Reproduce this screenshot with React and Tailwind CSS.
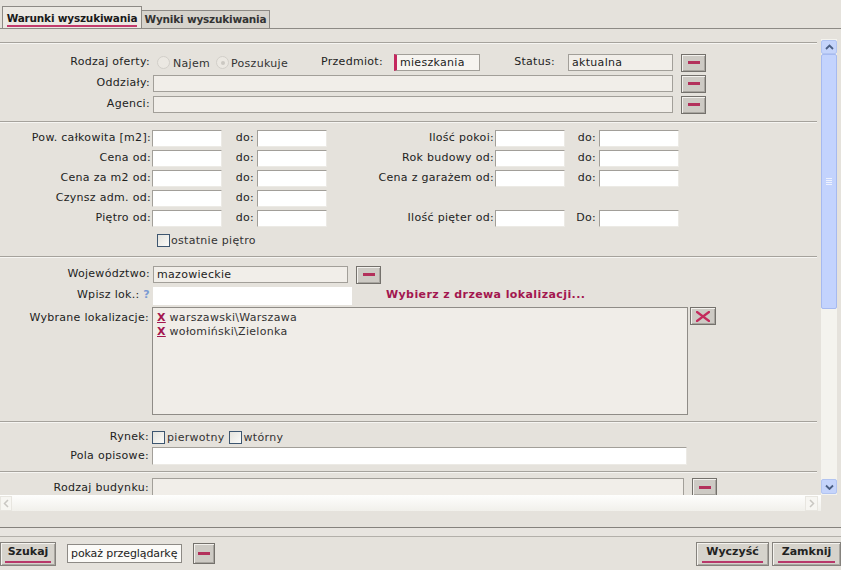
import React from 'react';

// Search form panel — XP style
const LBL = 'text-right pr-[1px] whitespace-nowrap';
const INPUT_DIS = 'h-[17px] bg-[#f1eee9] border border-[#a29f99] px-[3px] leading-[15px] whitespace-nowrap overflow-hidden';
const INPUT_W = 'h-[17px] bg-white border-t border-l border-[#a29f99] border-r border-b border-r-[#eceae5] border-b-[#eceae5]';

const Sep = () => <div className="h-[2px] w-[817px] border-t border-[#a5a29c] border-b border-b-[#f6f5f2]" />;

const DashBtn = ({ className = '' }) => (
  <div className={`w-[25px] h-[18px] flex items-center justify-center bg-[#cdcac4] border border-[#74716c] shadow-[inset_1px_1px_0_#f3f1ed,inset_-1px_-1px_0_#a8a59f] ${className}`}>
    <span className="w-[12px] h-[3px] bg-[#b3305b]" />
  </div>
);

const XBtn = ({ className = '' }) => (
  <div className={`w-[26px] h-[18px] flex items-center justify-center bg-[#cdcac4] border border-[#74716c] shadow-[inset_1px_1px_0_#f3f1ed,inset_-1px_-1px_0_#a8a59f] ${className}`}>
    <svg width="14" height="11" viewBox="0 0 14 11">
      <path d="M1 1 L13 10 M13 1 L1 10" stroke="#c42a5c" strokeWidth="2.2" strokeLinecap="round" />
    </svg>
  </div>
);

const Radio = ({ selected, className = '' }) => (
  <span className={`w-[13px] h-[13px] rounded-full border border-[#d2cfc9] bg-[#ebe8e2] flex items-center justify-center ${className}`}>
    {selected && <span className="w-[4px] h-[4px] rounded-full bg-[#cbc8c2]" />}
  </span>
);

const Check = ({ className = '' }) => (
  <span className={`w-[13px] h-[13px] border border-[#3d5670] bg-gradient-to-br from-[#e4e3dd] to-[#fbfbf9] ${className}`} />
);

const RangeRow = ({ l1, l2, showRight = true, upperDo = false }) => (
  <div className="h-[20px] flex items-center">
    <div className={`w-[152px] ${LBL}`}>{l1}</div>
    <div className={`w-[70px] ${INPUT_W}`} />
    <div className="w-[35px] text-right pr-[3px]">do:</div>
    <div className={`w-[70px] ${INPUT_W}`} />
    {showRight && (
      <>
        <div className={`w-[168px] ${LBL}`}>{l2}</div>
        <div className={`w-[70px] ${INPUT_W}`} />
        <div className="w-[34px] text-right pr-[3px]">{upperDo ? 'Do:' : 'do:'}</div>
        <div className={`w-[80px] ${INPUT_W}`} />
      </>
    )}
  </div>
);

const Chev = ({ d, color }) => (
  <svg width="9" height="6" viewBox="0 0 9 6">
    <path d={d} stroke={color} strokeWidth="1.8" fill="none" />
  </svg>
);

const BottomBtn = ({ label, className = '' }) => (
  <div className={`h-[24px] flex flex-col items-center justify-center bg-[#d6d3cc] border border-[#85827d] shadow-[inset_1px_1px_0_#f5f3ef,inset_-1px_-1px_0_#a9a6a0] ${className}`}>
    <span className="font-bold text-[#222] leading-[13px] tracking-normal">{label}</span>
    <span className="mt-[3px] h-[2px] w-[85%] bg-[#b8386a]" />
  </div>
);

export default function App() {
  return (
    <div className="w-[841px] h-[570px] overflow-hidden bg-[#e5e2dc] text-[11px] tracking-[0.3px] text-[#222] font-['DejaVu_Sans',Verdana,sans-serif] flex flex-col">
      {/* tabs */}
      <div className="h-[29px] shrink-0 border-b border-[#8d8a85] flex items-end pl-[2px]">
        <div className="h-[22px] w-[140px] border border-b-0 border-[#8d8a85] bg-[#ece9e3] flex flex-col items-center justify-center pt-[2px]">
          <span className="font-bold text-[10.5px] text-[#1a1a1a] leading-[14px] border-b-2 border-[#c33a6c] tracking-[-0.2px]">Warunki wyszukiwania</span>
        </div>
        <div className="h-[18px] w-[128px] border border-l-0 border-b-0 border-[#8d8a85] bg-[#d6d3cc] flex items-center justify-center font-bold text-[10.5px] text-[#333] tracking-[-0.2px]">
          Wyniki wyszukiwania
        </div>
      </div>
      <div className="h-[10px] shrink-0" />

      {/* scroll area */}
      <div className="h-[456px] shrink-0 flex">
        <div className="w-[821px] h-full overflow-hidden flex flex-col pt-[3px]">
          <Sep />
          <div className="pt-[8px] pb-[6px]">
            <div className="h-[21px] flex items-center">
              <div className={`w-[151px] ${LBL}`}>Rodzaj oferty:</div>
              <div className="w-[139px] flex items-center">
                <Radio className="ml-[6px]" />
                <span className="ml-[3px] mt-[3px] text-[#333]">Najem</span>
                <Radio selected className="ml-[6px]" />
                <span className="ml-[2px] mt-[3px] text-[#333]">Poszukuje</span>
              </div>
              <div className="w-[93px] text-right">Przedmiot:</div>
              <div className="ml-[11px] w-[86px] h-[17px] bg-[#f6f4f0] border border-[#a29f99] border-l-[3px] border-l-[#c4285f] pl-[3px] leading-[15px] whitespace-nowrap overflow-hidden">mieszkania</div>
              <div className="w-[75px] text-right">Status:</div>
              <div className={`ml-[13px] w-[105px] ${INPUT_DIS}`}>aktualna</div>
              <DashBtn className="ml-[8px]" />
            </div>
            <div className="h-[21px] flex items-center">
              <div className={`w-[151px] ${LBL}`}>Oddziały:</div>
              <div className={`ml-[2px] w-[520px] ${INPUT_DIS}`} />
              <DashBtn className="ml-[8px]" />
            </div>
            <div className="h-[21px] flex items-center">
              <div className={`w-[151px] ${LBL}`}>Agenci:</div>
              <div className={`ml-[2px] w-[520px] ${INPUT_DIS}`} />
              <DashBtn className="ml-[8px]" />
            </div>
          </div>
          <Sep />
          <div className="pt-[5px] pb-[6px]">
            <RangeRow l1="Pow. całkowita [m2]:" l2="Ilość pokoi:" />
            <RangeRow l1="Cena od:" l2="Rok budowy od:" />
            <RangeRow l1="Cena za m2 od:" l2="Cena z garażem od:" />
            <RangeRow l1="Czynsz adm. od:" showRight={false} />
            <RangeRow l1="Piętro od:" l2="Ilość pięter od:" upperDo />
            <div className="mt-[3px] h-[19px] flex items-center pl-[157px]">
              <Check />
              <span className="ml-[1px] mt-[2px] text-[#333]">ostatnie piętro</span>
            </div>
          </div>
          <Sep />
          <div className="pt-[6px] pb-[6px]">
            <div className="h-[21px] flex items-center">
              <div className={`w-[151px] ${LBL}`}>Województwo:</div>
              <div className={`ml-[2px] w-[195px] ${INPUT_DIS}`}>mazowieckie</div>
              <DashBtn className="ml-[8px]" />
            </div>
            <div className="h-[21px] flex items-center">
              <div className={`w-[151px] ${LBL}`}>
                Wpisz lok.: <span className="font-bold text-[#7b9bd3]">?</span>
              </div>
              <div className="ml-[2px] w-[199px] h-[18px] bg-white" />
              <div className="ml-[34px] font-bold text-[#a3174f] tracking-[0.4px]">Wybierz z drzewa lokalizacji...</div>
            </div>
            <div className="mt-[1px] flex items-start">
              <div className={`w-[150px] ${LBL} pt-[3px]`}>Wybrane lokalizacje:</div>
              <div className="ml-[2px] w-[536px] h-[108px] bg-[#f0ede8] border border-[#8f8c87] pl-[4px] pt-[3px] leading-[14px] text-[#333]">
                <div>
                  <span className="font-bold text-[#a3174f] underline">X</span> warszawski\Warszawa
                </div>
                <div>
                  <span className="font-bold text-[#a3174f] underline">X</span> wołomiński\Zielonka
                </div>
              </div>
              <XBtn className="ml-[2px]" />
            </div>
          </div>
          <Sep />
          <div className="pt-[5px] pb-[5px]">
            <div className="h-[18px] flex items-center">
              <div className={`w-[150px] ${LBL}`}>Rynek:</div>
              <Check className="ml-[2px]" />
              <span className="ml-[2px] mt-[3px] text-[#333]">pierwotny</span>
              <Check className="ml-[4px]" />
              <span className="ml-[2px] mt-[3px] text-[#333]">wtórny</span>
            </div>
            <div className="h-[20px] flex items-center">
              <div className={`w-[150px] ${LBL}`}>Pola opisowe:</div>
              <div className={`ml-[2px] w-[535px] h-[18px] ${INPUT_W}`} />
            </div>
          </div>
          <Sep />
          <div className="pt-[5px] flex items-start">
            <div className={`w-[150px] ${LBL} pt-[2px]`}>Rodzaj budynku:</div>
            <div className={`ml-[2px] w-[532px] h-[18px] ${INPUT_DIS}`} />
            <DashBtn className="ml-[8px]" />
          </div>
        </div>

        {/* vertical scrollbar */}
        <div className="w-[16px] h-full flex flex-col bg-[#f4f3ee]">
          <div className="h-[14px] mt-[1px] flex items-center justify-center bg-[#c5d4fb] border border-[#b2c4f1] rounded-[2px]">
            <Chev d="M1 5 L4.5 1.5 L8 5" color="#4b5f84" />
          </div>
          <div className="h-[255px] bg-[#c3d3fd] border border-[#a6baf0] rounded-[2px] flex items-center justify-center">
            <div className="flex flex-col gap-[1px]">
              <span className="w-[6px] h-px bg-[#eef2fe]" />
              <span className="w-[6px] h-px bg-[#eef2fe]" />
              <span className="w-[6px] h-px bg-[#eef2fe]" />
              <span className="w-[6px] h-px bg-[#eef2fe]" />
            </div>
          </div>
          <div className="flex-1" />
          <div className="h-[15px] mb-[1px] flex items-center justify-center bg-[#c5d4fb] border border-[#b2c4f1] rounded-[2px]">
            <Chev d="M1 1.5 L4.5 5 L8 1.5" color="#4b5f84" />
          </div>
        </div>
      </div>

      {/* horizontal scrollbar */}
      <div className="h-[16px] w-[821px] shrink-0 flex items-center justify-between bg-gradient-to-b from-[#fefefd] to-[#f1f0eb]">
        <div className="w-[12px] h-[15px] flex items-center justify-center border border-[#e8e6e0] bg-[#f7f6f2]">
          <svg width="6" height="9" viewBox="0 0 6 9"><path d="M5 1 L1.5 4.5 L5 8" stroke="#c9c7c2" strokeWidth="1.5" fill="none" /></svg>
        </div>
        <div className="w-[13px] h-[15px] mr-[3px] flex items-center justify-center border border-[#e8e6e0] bg-[#f7f6f2]">
          <svg width="6" height="9" viewBox="0 0 6 9"><path d="M1 1 L4.5 4.5 L1 8" stroke="#c9c7c2" strokeWidth="1.5" fill="none" /></svg>
        </div>
      </div>
      <div className="h-[16px] shrink-0" />
      <div className="h-px shrink-0 bg-[#85827d]" />
      <div className="h-[9px] shrink-0 bg-[#e8e5e0] border-b border-[#b3b0aa]" />

      {/* bottom bar */}
      <div className="flex-1 flex items-center">
        <BottomBtn label="Szukaj" className="w-[56px]" />
        <div className="ml-[11px] w-[115px] h-[19px] bg-[#fbfaf7] border border-[#8d8a85] pl-[3px] leading-[17px] whitespace-nowrap overflow-hidden text-[#222] tracking-[-0.1px]">pokaż przeglądarkę</div>
        <DashBtn className="ml-[11px] !w-[22px] !h-[21px]" />
        <div className="flex-1" />
        <BottomBtn label="Wyczyść" className="w-[73px]" />
        <BottomBtn label="Zamknij" className="ml-[3px] w-[69px]" />
      </div>
    </div>
  );
}
